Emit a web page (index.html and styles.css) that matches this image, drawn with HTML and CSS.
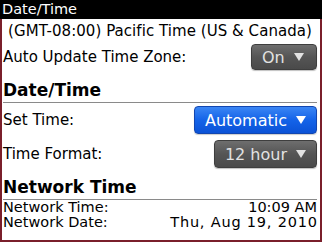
FILE: index.html
```html
<!DOCTYPE html>
<html>
<head>
<meta charset="utf-8">
<link rel="stylesheet" href="styles.css">
</head>
<body>
<div class="screen">
  <div class="titlebar">Date/Time</div>
  <div class="content">
    <div class="tz">(GMT-08:00) Pacific Time (US &amp; Canada)</div>
    <div class="row r-auto">
      <span class="label">Auto Update Time Zone:</span>
      <span class="btn gray w-on">On<svg class="arr" width="10" height="8" viewBox="0 0 10 8"><path d="M0 0H10L5 8Z" fill="currentColor"/></svg></span>
    </div>
    <div class="header h-dt">Date/Time</div>
    <div class="row r-set">
      <span class="label">Set Time:</span>
      <span class="btn blue">Automatic<svg class="arr" width="10" height="8" viewBox="0 0 10 8"><path d="M0 0H10L5 8Z" fill="currentColor"/></svg></span>
    </div>
    <div class="row r-set">
      <span class="label">Time Format:</span>
      <span class="btn gray">12 hour<svg class="arr" width="10" height="8" viewBox="0 0 10 8"><path d="M0 0H10L5 8Z" fill="currentColor"/></svg></span>
    </div>
    <div class="header h-nt">Network Time</div>
    <div class="info">
      <span>Network Time:</span><span>10:09 AM</span>
    </div>
    <div class="info">
      <span>Network Date:</span><span class="date">Thu, Aug 19, 2010</span>
    </div>
  </div>
</div>
</body>
</html>
```
FILE: styles.css
```css
html, body {
  margin: 0;
  padding: 0;
  background: #fff;
}
.screen {
  width: 322px;
  height: 242px;
  display: flex;
  flex-direction: column;
  font-family: "DejaVu Sans", sans-serif;
  font-size: 15px;
  color: #000;
  overflow: hidden;
}
.titlebar {
  height: 19px;
  background: #000;
  color: #fff;
  font-size: 14.5px;
  line-height: 19px;
  padding-left: 2px;
  flex: none;
}
.content {
  flex: 1;
  border: 2px solid #7a1f2b;
  border-top: none;
  display: flex;
  flex-direction: column;
  padding: 0 3px 0 1px;
}
.tz {
  height: 24px;
  line-height: 25px;
  text-align: center;
  white-space: nowrap;
  font-size: 15px;
  letter-spacing: 0.05px;
}
.row {
  display: flex;
  align-items: center;
  justify-content: space-between;
}
.r-auto { height: 28px; }
.r-set { height: 34px; }
.header {
  font-weight: bold;
  font-size: 17px;
  border-bottom: 1px solid #8a8a8a;
  display: flex;
  align-items: flex-end;
  padding-bottom: 2px;
  box-sizing: border-box;
}
.h-dt { height: 32px; }
.h-nt { height: 29px; }
.info {
  display: flex;
  justify-content: space-between;
  height: 15px;
  line-height: 15px;
  font-size: 14.5px;
}
.info span { line-height: 15px; }
.info .date { letter-spacing: 0.8px; margin-right: -0.8px; }
.btn {
  display: inline-flex;
  align-items: center;
  box-sizing: border-box;
  height: 28px;
  padding: 0 10px 0 10px;
  border-radius: 4px;
  font-size: 16px;
}
.btn .arr { margin-left: 9px; }
.w-on { height: 26px; width: 66px; padding-left: 10px; }
.gray {
  background: linear-gradient(#6e6e6e, #555555 50%, #4a4a4a);
  border: 1px solid #3e3e3e;
  color: #e2e2e2;
  box-shadow: 0 1px 1px rgba(0,0,0,0.25);
}
.blue {
  background: linear-gradient(#3b86f4, #1463e8 50%, #0b52d6);
  border: 1px solid #1246b0;
  color: #fff;
  box-shadow: 0 1px 1px rgba(0,0,0,0.2);
}
```
